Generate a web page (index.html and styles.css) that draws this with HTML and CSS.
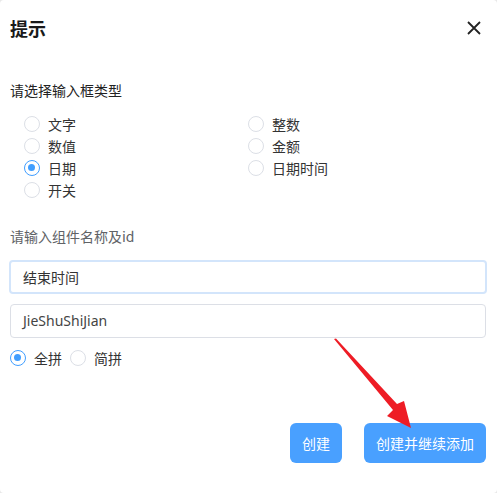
FILE: index.html
```html
<!DOCTYPE html>
<html lang="zh">
<head>
<meta charset="utf-8">
<link rel="stylesheet" href="styles.css">
</head>
<body>
<div class="dialog">
  <div class="header">
    <span class="title">提示</span>
    <svg class="close" width="14" height="14" viewBox="0 0 14 14"><path d="M1 1L13 13M13 1L1 13" stroke="#222" stroke-width="1.8" fill="none"/></svg>
  </div>
  <div class="label">请选择输入框类型</div>
  <div class="types">
    <label class="radio"><span class="dot"></span><span>文字</span></label>
    <label class="radio"><span class="dot"></span><span>整数</span></label>
    <label class="radio"><span class="dot"></span><span>数值</span></label>
    <label class="radio"><span class="dot"></span><span>金额</span></label>
    <label class="radio"><span class="dot on"></span><span>日期</span></label>
    <label class="radio"><span class="dot"></span><span>日期时间</span></label>
    <label class="radio"><span class="dot"></span><span>开关</span></label>
  </div>
  <div class="label sub">请输入组件名称及id</div>
  <div class="input focus">结束时间</div>
  <div class="input">JieShuShiJian</div>
  <div class="pinyin">
    <label class="radio"><span class="dot on"></span><span>全拼</span></label>
    <label class="radio"><span class="dot"></span><span>简拼</span></label>
  </div>
  <div class="footer">
    <button class="btn">创建</button>
    <button class="btn">创建并继续添加</button>
  </div>
  <svg class="arrow" width="497" height="493" viewBox="0 0 497 493">
    <polygon points="334,339 336,338.5 397,404 404,401 411,428 387,416 393,410" fill="#ee1c25"/>
  </svg>
</div>
</body>
</html>
```
FILE: styles.css
```css
html, body {
  margin: 0;
  padding: 0;
  background: #e8e8e8;
}
body {
  font-family: "Noto Sans CJK SC", "Noto Sans", sans-serif;
  color: #303133;
  font-size: 14px;
}
.dialog {
  position: relative;
  width: 497px;
  height: 493px;
  background: #fff;
  border-radius: 4px;
  box-sizing: border-box;
  padding: 0 11px 0 10px;
  display: flex;
  flex-direction: column;
}
.header {
  display: flex;
  justify-content: space-between;
  align-items: center;
  height: 24px;
  margin-top: 16px;
}
.title {
  font-size: 18px;
  font-weight: bold;
  color: #1a1a1a;
  line-height: 24px;
}
.close {
  margin-right: 5px;
}
.label {
  margin-top: 40px;
  line-height: 20px;
  color: #222;
}
.label.sub {
  margin-top: 25px;
  color: #606266;
}
.types {
  display: grid;
  grid-template-columns: 224px 1fr;
  padding-left: 14px;
  margin-top: 13px;
}
.radio {
  display: flex;
  align-items: center;
  gap: 8px;
  height: 22px;
  line-height: 22px;
  color: #333;
}
.dot {
  width: 16px;
  height: 16px;
  box-sizing: border-box;
  border: 1px solid #dcdfe6;
  border-radius: 50%;
  background: #fff;
  position: relative;
}
.dot.on {
  border: 1.5px solid #409eff;
}
.dot.on::after {
  content: "";
  position: absolute;
  left: 3px;
  top: 3px;
  width: 7px;
  height: 7px;
  border-radius: 50%;
  background: #409eff;
}
.input {
  height: 34px;
  box-sizing: border-box;
  border: 1px solid #dcdfe6;
  border-radius: 4px;
  padding-left: 12px;
  line-height: 32px;
  color: #333;
  font-size: 14px;
}
.input.focus {
  margin-top: 14px;
  margin-left: -1px;
  margin-right: -1px;
  border: 2px solid #d3e5fb;
  line-height: 30px;
  padding-left: 12px;
}
.input + .input {
  margin-top: 10px;
  font-family: "Noto Sans", sans-serif;
  color: #444;
}
.pinyin {
  display: flex;
  gap: 8px;
  margin-top: 9px;
}
.footer {
  display: flex;
  justify-content: flex-end;
  gap: 22px;
  margin-top: 54px;
}
.btn {
  height: 40px;
  padding: 0 12px;
  border: none;
  border-radius: 6px;
  background: #49a0ff;
  color: #fff;
  font-family: "Noto Sans CJK SC", sans-serif;
  font-size: 14px;
}
.arrow {
  position: absolute;
  left: 0;
  top: 0;
  pointer-events: none;
}
```
